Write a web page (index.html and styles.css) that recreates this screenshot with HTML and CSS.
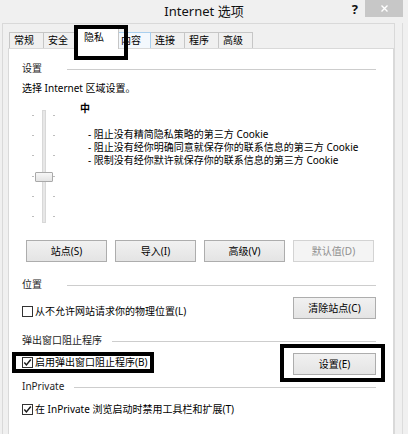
FILE: index.html
```html
<!DOCTYPE html>
<html>
<head>
<meta charset="utf-8">
<title>Internet 选项</title>
<link rel="stylesheet" href="styles.css">
</head>
<body>
<div class="titlebar">
  <div></div>
  <div class="title">Internet 选项</div>
  <div class="controls">
    <span class="help">?</span>
    <span class="close"><svg width="7" height="7" viewBox="0 0 7 7"><path d="M0.5 0.5L6.5 6.5M6.5 0.5L0.5 6.5" stroke="#fff" stroke-width="1.4"/></svg></span>
  </div>
</div>
<div class="frame">
  <div class="client">
    <div class="tabs">
      <div class="tab">常规</div>
      <div class="tab">安全</div>
      <div class="tab sel">隐私</div>
      <div class="tab hot">内容</div>
      <div class="tab">连接</div>
      <div class="tab">程序</div>
      <div class="tab">高级</div>
    </div>
    <div class="panel">
      <div class="group"><span class="glabel">设置</span><span class="gline"></span></div>
      <div class="intro">选择 Internet 区域设置。</div>
      <div class="privacy">
        <div class="slider">
          <div class="ticks ticks-left"><i></i><i></i><i></i><i></i><i></i><i></i></div>
          <div class="track"><div class="thumb"></div></div>
          <div class="ticks ticks-right"><i></i><i></i><i></i><i></i><i></i><i></i></div>
        </div>
        <div class="desc">
          <div class="level">中</div>
          <div class="bullets">
            <div>- 阻止没有精简隐私策略的第三方 Cookie</div>
            <div>- 阻止没有经你明确同意就保存你的联系信息的第三方 Cookie</div>
            <div>- 限制没有经你默许就保存你的联系信息的第三方 Cookie</div>
          </div>
        </div>
      </div>
      <div class="btnrow">
        <button class="btn">站点(S)</button>
        <button class="btn">导入(I)</button>
        <button class="btn">高级(V)</button>
        <button class="btn disabled">默认值(D)</button>
      </div>

      <div class="group sec-location"><span class="glabel">位置</span><span class="gline"></span></div>
      <div class="optrow loc">
        <span class="check"><span class="cb"></span><span>从不允许网站请求你的物理位置(L)</span></span>
        <button class="btn wide">清除站点(C)</button>
      </div>

      <div class="group sec-popup"><span class="glabel">弹出窗口阻止程序</span><span class="gline"></span></div>
      <div class="optrow popup">
        <span class="check boxed"><span class="cb"><svg width="9" height="9" viewBox="0 0 9 9"><path d="M1.3 4.6L3.4 6.9L7.8 1.6" fill="none" stroke="#1a1a1a" stroke-width="1.5"/></svg></span><span>启用弹出窗口阻止程序(B)</span></span>
        <button class="btn wide boxed">设置(E)</button>
      </div>

      <div class="group sec-inprivate"><span class="glabel">InPrivate</span><span class="gline"></span></div>
      <div class="optrow inp">
        <span class="check"><span class="cb"><svg width="9" height="9" viewBox="0 0 9 9"><path d="M1.3 4.6L3.4 6.9L7.8 1.6" fill="none" stroke="#1a1a1a" stroke-width="1.5"/></svg></span><span>在 InPrivate 浏览启动时禁用工具栏和扩展(T)</span></span>
      </div>
    </div>
  </div>
  <div class="edge"></div>
</div>
</body>
</html>
```

FILE: styles.css
```css
* { box-sizing: border-box; }
html, body { margin: 0; padding: 0; }
body {
  width: 408px;
  height: 434px;
  overflow: hidden;
  background: #f0f0f0;
  font-family: "Noto Sans", "Noto Sans CJK SC", sans-serif;
  font-size: 10px;
  line-height: 16px;
  color: #000;
}

.titlebar {
  display: grid;
  grid-template-columns: 1fr auto 1fr;
  height: 23px;
}
.title {
  font-size: 13px;
  line-height: 23px;
  color: #111;
}
.controls {
  justify-self: end;
  display: flex;
  align-items: flex-start;
  margin-right: 5px;
}
.help {
  font-size: 13px;
  font-weight: 700;
  line-height: 19px;
  margin-right: 7px;
  color: #111;
}
.close {
  width: 38px;
  height: 17px;
  background: #c7c7c7;
  display: flex;
  align-items: center;
  justify-content: center;
}
.close svg { display: block; }

.frame {
  display: flex;
  height: 411px;
}
.client {
  margin-left: 2px;
  width: 393px;
  border: 1px solid #d9d9d9;
  border-bottom: none;
  display: flex;
  flex-direction: column;
  overflow: hidden;
}
.edge {
  width: 8px;
  border-right: 1px solid #dcdcdc;
}

.tabs {
  display: flex;
  align-items: flex-end;
  height: 24px;
  padding-left: 6px;
  flex: none;
}
.tab {
  width: 35px;
  height: 16px;
  margin-left: -1px;
  padding: 0 0 0 4px;
  border: 1px solid #c6c6c6;
  border-bottom: none;
  background: #f0f0f0;
  line-height: 15px;
  white-space: nowrap;
}
.tab:first-child { margin-left: 0; }
.tab.hot {
  position: relative;
  z-index: 1;
  background: #f3f8fd;
  border-color: #a9cfee;
}
.tab.sel {
  position: relative;
  z-index: 3;
  width: 44px;
  height: 23px;
  margin: 0 -2px -1px -3px;
  padding: 3px 0 0 8px;
  background: #fff;
}
.tab.sel::after {
  content: "";
  position: absolute;
  left: -2px;
  top: -2px;
  width: 46px;
  height: 27px;
  border: 4px solid #000;
}

.panel {
  position: relative;
  z-index: 1;
  flex: none;
  margin-left: 5px;
  width: 386px;
  height: 400px;
  background: #fff;
  border: 1px solid #d9d9d9;
  padding: 11px 17px 0 13px;
}

.group {
  display: flex;
  align-items: center;
}
.glabel {
  min-width: 35px;
  color: #1e1e1e;
}
.gline {
  flex: 1;
  height: 1px;
  background: #cdcdcd;
  margin: 2px 0 0 10px;
}
.sec-location { margin-top: 14px; }
.sec-popup { margin-top: 13px; }
.sec-inprivate { margin-top: 3px; }

.intro { margin-top: 4px; }

.privacy {
  display: flex;
  align-items: flex-start;
  margin-top: 4px;
}
.slider {
  display: flex;
  margin: 10px 0 0 10px;
  height: 113px;
}
.ticks {
  display: flex;
  flex-direction: column;
  justify-content: space-between;
  padding: 5px 0 6px;
}
.ticks i {
  display: block;
  height: 1px;
  background: #bdbdbd;
}
.ticks-left { width: 2px; }
.ticks-left i { width: 2px; }
.ticks-right { width: 3px; margin-left: 7px; }
.ticks-right i { width: 2px; }
.track {
  position: relative;
  margin-left: 8px;
  width: 4px;
  height: 113px;
  background: #e7e7e7;
  border: 1px solid #d8d8d8;
}
.thumb {
  position: absolute;
  left: -8px;
  top: 61px;
  width: 18px;
  height: 10px;
  border: 1px solid #a9a9a9;
  border-radius: 1px;
  background: linear-gradient(#f7f7f7, #e4e4e4);
}
.desc { margin-left: 24px; }
.level { font-weight: 700; }
.bullets {
  margin-top: 12px;
  padding-left: 8px;
  line-height: 13px;
  white-space: nowrap;
}

.btnrow {
  display: flex;
  gap: 8px;
  margin: 17px 0 0 4px;
}
.btn {
  width: 81px;
  height: 22px;
  padding: 0;
  border: 1px solid #adadad;
  border-radius: 0;
  background: linear-gradient(#f1f1f1, #e4e4e4);
  font: inherit;
  line-height: 20px;
  color: #000;
  white-space: nowrap;
}
.btn.disabled {
  border-color: #d3d3d3;
  background: #f4f4f4;
  color: #8f8f8f;
}
.btn.wide { width: 83px; }
.btn.boxed { position: relative; }
.btn.boxed::after {
  content: "";
  position: absolute;
  left: -14px;
  top: -10px;
  right: -10px;
  bottom: -8px;
  border: 4px solid #000;
}

.optrow {
  display: flex;
  justify-content: space-between;
  align-items: flex-start;
  margin-top: 5px;
}
.optrow.inp { margin-top: 7px; }
.check {
  display: inline-flex;
  align-items: center;
  gap: 2px;
  position: relative;
  white-space: nowrap;
}
.loc .check { margin-top: 6px; }
.popup .check { margin-top: 1px; }
.check.boxed::after {
  content: "";
  position: absolute;
  left: -10px;
  top: -2px;
  right: -6px;
  bottom: -3px;
  border: 4px solid #000;
}
.cb {
  width: 11px;
  height: 11px;
  border: 1px solid #333;
  background: #fff;
  display: flex;
  align-items: center;
  justify-content: center;
  flex: none;
}
.cb svg { display: block; }
```
